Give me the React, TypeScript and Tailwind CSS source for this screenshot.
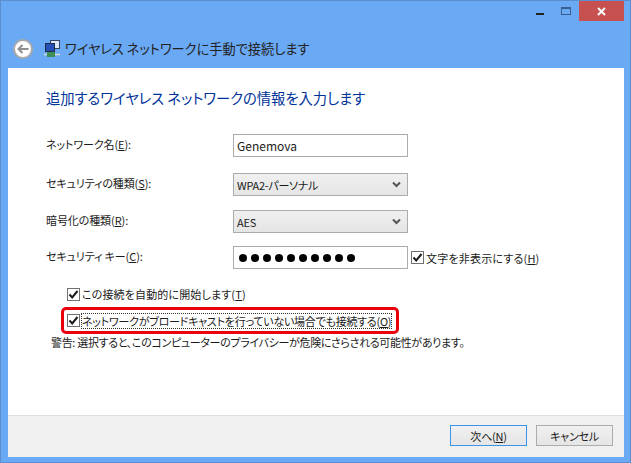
import React from "react";

function Check() {
  return (
    <span className="w-[13px] h-[13px] shrink-0 border border-[#707070] bg-white flex items-center justify-center">
      <svg width="11" height="11" viewBox="0 0 11 11">
        <path d="M1.5 5.5 L4.2 8.5 L9.5 2" fill="none" stroke="#1a1a1a" strokeWidth="2" />
      </svg>
    </span>
  );
}

function Label({ children }: { children: React.ReactNode }) {
  return <div className="w-[187px] shrink-0 pb-[3px] tracking-[-0.1px] text-[#1a1a1a]">{children}</div>;
}

function Chevron() {
  return (
    <svg width="9" height="7" viewBox="0 0 9 7" className="shrink-0">
      <path d="M1 1.5 L4.5 5 L8 1.5" fill="none" stroke="#555" strokeWidth="2" />
    </svg>
  );
}

function Select({ value }: { value: string }) {
  return (
    <div className="w-[175px] h-[23px] border border-[#acacac] bg-gradient-to-b from-[#f0f0f0] to-[#e5e5e5] flex items-center justify-between pl-[3px] pr-[6px] text-[#1a1a1a]">
      <span>{value}</span>
      <Chevron />
    </div>
  );
}

export default function App() {
  return (
    <div className="w-[631px] h-[463px] bg-[#6aa9f4] border border-[#5b8fd0] flex flex-col overflow-hidden text-[11px] tracking-[-0.25px] leading-[16px] [font-feature-settings:'palt'] font-['Noto_Sans_CJK_JP','Noto_Sans',sans-serif]">
      <div className="h-[20px] flex justify-end pr-[6px] shrink-0">
        <div className="flex items-start">
          <div className="w-[26px] h-[20px] flex justify-center items-start pt-[12px]">
            <div className="w-[8px] h-[2px] bg-[#222]" />
          </div>
          <div className="w-[26px] h-[20px] flex justify-center items-start pt-[6px]">
            <div className="w-[10px] h-[8px] border border-[#3b5f90] border-t-2" />
          </div>
          <div className="w-[45px] h-[20px] bg-[#c75050] flex items-center justify-center">
            <svg width="9" height="9" viewBox="0 0 9 9">
              <path d="M1 1 L8 8 M8 1 L1 8" stroke="#fff" strokeWidth="2" />
            </svg>
          </div>
        </div>
      </div>
      <div className="h-[47px] shrink-0 flex items-center pl-[12px] pt-[9px]">
        <div className="w-[20px] h-[20px] rounded-full bg-white border-2 border-[#a9a9a9] flex items-center justify-center">
          <svg width="12" height="10" viewBox="0 0 12 10">
            <path d="M5.5 1 L1.5 5 L5.5 9 M1.5 5 H11.5" fill="none" stroke="#8f8f8f" strokeWidth="2" />
          </svg>
        </div>
        <svg width="16" height="18" viewBox="0 0 16 18" className="ml-[11px] shrink-0">
          <rect x="6.5" y="0.5" width="9" height="8" fill="#dbe8f8" stroke="#34456a" />
          <rect x="1.5" y="3.5" width="9" height="8" fill="#2450b8" stroke="#1d2b4a" />
          <path d="M0 14.5 H16" stroke="#d8d8d8" strokeWidth="1.5" />
          <rect x="3" y="12" width="8" height="5" fill="#3f8f58" />
        </svg>
        <span className="ml-[5px] text-[#222] text-[13.2px] tracking-normal">ワイヤレス ネットワークに手動で接続します</span>
      </div>
      <div className="ml-[7px] mr-[6px] mb-[5px] flex-1 bg-white flex flex-col min-h-0">
        <div className="flex-1 pl-[38px] pt-[21px]">
          <div className="text-[#003399] text-[14.3px] tracking-normal leading-[18px]">追加するワイヤレス ネットワークの情報を入力します</div>
          <div className="mt-[27px] flex items-center h-[23px]">
            <Label>ネットワーク名(<u>E</u>):</Label>
            <div className="w-[175px] h-[23px] border border-[#acacac] flex items-center pl-[3px] text-[12px] tracking-normal text-[#1a1a1a]">Genemova</div>
          </div>
          <div className="mt-[16px] flex items-center h-[23px]">
            <Label>セキュリティの種類(<u>S</u>):</Label>
            <Select value="WPA2-パーソナル" />
          </div>
          <div className="mt-[14px] flex items-center h-[23px]">
            <Label>暗号化の種類(<u>R</u>):</Label>
            <Select value="AES" />
          </div>
          <div className="mt-[13px] flex items-center h-[23px]">
            <Label>セキュリティ キー(<u>C</u>):</Label>
            <div className="w-[175px] h-[23px] border border-[#acacac] flex items-center gap-[4px] pl-[5px]">
              {Array.from({ length: 10 }).map((_, i) => (
                <span key={i} className="w-[8px] h-[8px] rounded-full bg-black" />
              ))}
            </div>
            <div className="ml-[3px] flex items-center gap-[2px] text-[#1a1a1a]">
              <Check />
              <span className="tracking-[0.2px]">文字を非表示にする(<u>H</u>)</span>
            </div>
          </div>
          <div className="mt-[17px] ml-[21px] flex items-center gap-[2px] h-[16px] text-[#1a1a1a]">
            <Check />
            <span className="tracking-[0.15px]">この接続を自動的に開始します(<u>T</u>)</span>
          </div>
          <div className="mt-[5px] ml-[15px] w-[338px] h-[27px] border-[3px] border-[#e8000f] rounded-[5px] flex items-center pl-[3px] gap-[1px] text-[#1a1a1a]">
            <Check />
            <span className="border border-dotted border-[#333] leading-[14px] whitespace-nowrap">ネットワークがブロードキャストを行っていない場合でも接続する(<u>O</u>)</span>
          </div>
          <div className="ml-[5px] tracking-[-0.32px] text-[#1a1a1a] whitespace-nowrap">警告: 選択すると、このコンピューターのプライバシーが危険にさらされる可能性があります。</div>
        </div>
        <div className="h-[42px] shrink-0 bg-[#f0f0f0] border-t border-[#dfdfdf] flex justify-end items-start pt-[9px] pr-[11px] gap-[9px] text-[#1a1a1a]">
          <div className="w-[77px] h-[21px] border border-[#3c94e8] bg-gradient-to-b from-[#f0f0f0] to-[#e5e5e5] flex items-center justify-center">次へ(<u>N</u>)</div>
          <div className="w-[77px] h-[21px] border border-[#acacac] bg-gradient-to-b from-[#f0f0f0] to-[#e5e5e5] flex items-center justify-center">キャンセル</div>
        </div>
      </div>
    </div>
  );
}
